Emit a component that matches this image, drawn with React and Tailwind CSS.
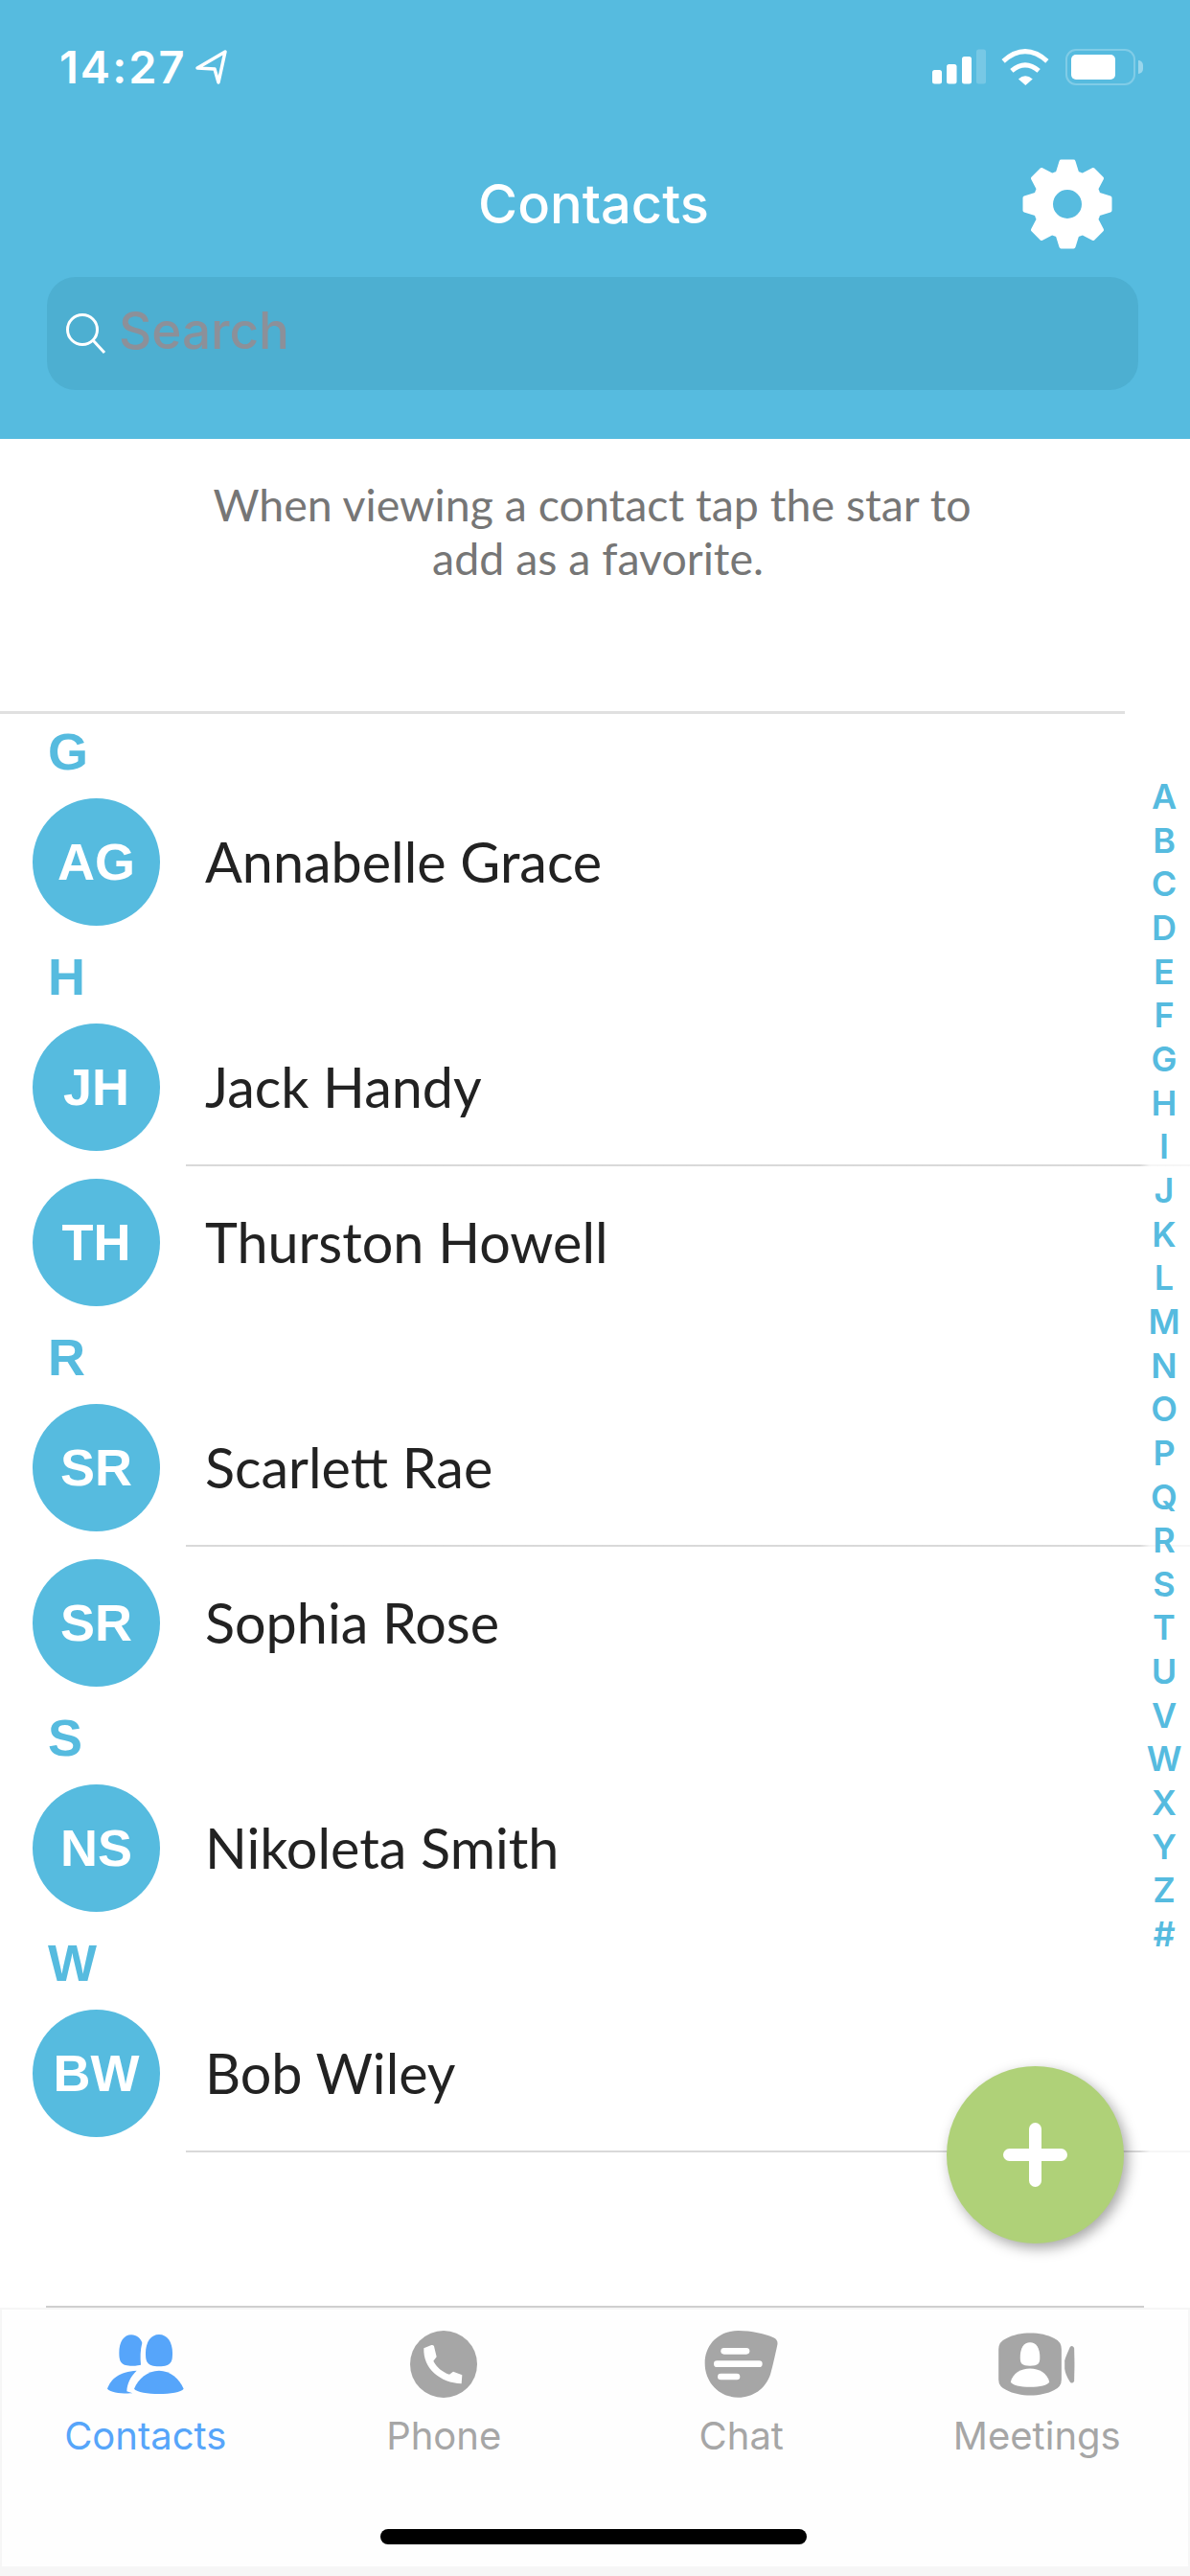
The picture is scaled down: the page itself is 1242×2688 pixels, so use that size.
import React from 'react'

const sections = [
  { letter: 'G', people: [{ initials: 'AG', name: 'Annabelle Grace' }] },
  {
    letter: 'H',
    people: [
      { initials: 'JH', name: 'Jack Handy', line: true },
      { initials: 'TH', name: 'Thurston Howell' },
    ],
  },
  {
    letter: 'R',
    people: [
      { initials: 'SR', name: 'Scarlett Rae', line: true },
      { initials: 'SR', name: 'Sophia Rose' },
    ],
  },
  { letter: 'S', people: [{ initials: 'NS', name: 'Nikoleta Smith' }] },
  { letter: 'W', people: [{ initials: 'BW', name: 'Bob Wiley', line: true }] },
]

const alphabet = 'ABCDEFGHIJKLMNOPQRSTUVWXYZ#'.split('')

function StatusIcons() {
  return (
    <div className="flex items-start">
      <svg className="w-[58px] h-[38px]" viewBox="0 0 58 38" fill="#fff">
        <rect x="2" y="22" width="10" height="14.5" rx="2.5" />
        <rect x="17" y="16" width="10.5" height="20.5" rx="2.5" />
        <rect x="33" y="8" width="10" height="28.5" rx="2.5" />
        <rect x="48" y="0.5" width="10" height="36" rx="2.5" opacity="0.2" />
      </svg>
      <svg className="ml-[15px] w-[52px] h-[38px]" viewBox="373 92 150 113" fill="none" stroke="#fff">
        <path d="M380 130Q448 70 516 130" strokeWidth="15" />
        <path d="M406 160Q448 124 490 160" strokeWidth="15" />
        <path d="M427 186Q448 166 471 186L449 205Z" fill="#fff" stroke="none" />
      </svg>
      <div className="ml-[16px] relative w-[73px] h-[38px] rounded-[11px] border-[2.5px] border-white/25 p-[4px]">
        <div className="w-[46px] h-full rounded-[5px] bg-white" />
        <div className="absolute right-[-10px] top-[10px] w-[5px] h-[14px] rounded-r-full bg-white/40" />
      </div>
    </div>
  )
}

function Gear() {
  const teeth = [0, 45, 90, 135, 180, 225, 270, 315]
  return (
    <svg className="w-[94px] h-[94px]" viewBox="-47 -47 94 94" fill="#fff">
      <circle r="25.5" fill="none" stroke="#fff" strokeWidth="21" />
      {teeth.map((deg) => (
        <path
          key={deg}
          d="M-11 -30L-6.5 -44.5H6.5L11 -30Z"
          stroke="#fff"
          strokeWidth="4"
          strokeLinejoin="round"
          transform={`rotate(${deg})`}
        />
      ))}
    </svg>
  )
}

function ContactsIcon() {
  return (
    <svg className="w-[80px] h-[62px]" viewBox="153 42 240 186" fill="#56a5fa">
      <path d="M273 100C273 65 290 42 315 42C340 42 357 65 357 100C357 125 355 142 315 142C275 142 273 125 273 100Z" />
      <path d="M190 100C190 65 205 43 228 43C245 43 258 55 262 68C256 90 256 115 258 137C245 140 235 140 225 140C195 140 190 125 190 100Z" />
      <path d="M237 212C250 180 280 155 315 155C350 155 378 180 392 212C385 222 350 228 315 228C280 228 245 222 237 212Z" />
      <path d="M153 212C165 180 190 158 245 155C225 175 215 195 214 220L232 226C200 228 165 224 153 212Z" />
    </svg>
  )
}

function PhoneIcon() {
  return (
    <svg className="w-[70px] h-[70px]" viewBox="1105 31 210 210">
      <circle cx="1210" cy="136" r="105" fill="#a6a6a6" />
      <path
        d="M1148 86L1172 76Q1178 75 1180 80L1188 113L1178 126C1188 145 1205 160 1228 168L1240 159L1268 170L1266 197C1200 195 1145 150 1148 86Z"
        fill="#fff"
      />
    </svg>
  )
}

function ChatIcon() {
  return (
    <svg className="w-[77px] h-[70px]" viewBox="108 28 231 210">
      <path
        d="M110 130C110 70 155 28 215 28C255 28 300 38 325 50Q340 57 337 72C330 105 322 140 315 165C300 210 260 237 215 237C155 237 110 190 110 130Z"
        fill="#a6a6a6"
      />
      <rect x="160" y="82" width="90" height="20" rx="10" fill="#fff" />
      <rect x="138" y="122" width="152" height="20" rx="10" fill="#fff" />
      <rect x="150" y="162" width="70" height="20" rx="10" fill="#fff" />
    </svg>
  )
}

function MeetingsIcon() {
  return (
    <svg className="w-[80px] h-[66px]" viewBox="1030 37 240 199">
      <path
        d="M1030 90Q1030 65 1055 55C1095 33 1165 33 1205 55Q1228 65 1228 90L1228 185Q1228 208 1205 218C1165 240 1095 240 1055 218Q1030 208 1030 185Z"
        fill="#a6a6a6"
      />
      <path d="M1098 115C1098 85 1110 68 1129 68C1148 68 1160 85 1160 115C1160 135 1155 142 1129 142C1103 142 1098 135 1098 115Z" fill="#fff" />
      <path d="M1068 192C1075 165 1100 150 1129 150C1158 150 1183 165 1190 192C1185 203 1160 208 1129 208C1098 208 1073 203 1068 192Z" fill="#fff" />
      <path d="M1238 125Q1240 115 1255 82Q1262 75 1268 85Q1270 135 1268 190Q1262 200 1255 192Q1240 170 1238 150Z" fill="#a6a6a6" />
    </svg>
  )
}

function Tab({ icon, label, active, className }) {
  return (
    <div className={`flex flex-col items-center ${className}`}>
      <div className="h-[72px] flex items-center justify-center">{icon}</div>
      <span className={`mt-[16px] text-[40px] leading-[46px] font-['Inter',sans-serif] ${active ? 'text-[#56a5fa]' : 'text-[#a6a6a6]'}`}>
        {label}
      </span>
    </div>
  )
}

function ContactRow({ person }) {
  return (
    <div>
      <div className="flex items-center pl-[34px]">
        <div className="w-[133px] h-[133px] rounded-full bg-[#56bbdf] flex items-center justify-center text-white text-[54px] font-bold font-['Liberation_Sans',sans-serif]">
          {person.initials}
        </div>
        <span className="ml-[47px] text-[57.5px] text-[#222222] font-['Lato',sans-serif]">{person.name}</span>
      </div>
      <div className="h-[29px] flex items-center pl-[194px]">
        {person.line && <div className="w-full h-[2px] bg-gradient-to-r from-[#d9d9d9] from-[95%] to-[#f6f6f6] to-[96%]" />}
      </div>
    </div>
  )
}

export default function App() {
  return (
    <div className="relative w-[1242px] h-[2688px] flex flex-col bg-white overflow-hidden">
      <header className="h-[458px] bg-[#56bbdf] text-white font-['Inter',sans-serif]">
        <div className="flex items-start justify-between pt-[51px] pl-[62px] pr-[57px]">
          <div className="flex items-center">
            <span className="text-[47px] leading-[38px] font-semibold tracking-[2px]">14:27</span>
            <svg className="ml-[9px] w-[34px] h-[36px]" viewBox="0 0 34 36" fill="none" stroke="#fff" strokeWidth="3.5" strokeLinejoin="round">
              <path d="M2 19L31 2L24 34L20 20Z" />
            </svg>
          </div>
          <StatusIcons />
        </div>
        <div className="mt-[77px] relative flex items-center justify-center h-[94px] pr-[3px]">
          <h1 className="text-[56px] font-medium">Contacts</h1>
          <div className="absolute left-[1067px] top-0">
            <Gear />
          </div>
        </div>
        <div className="mt-[29px] ml-[49px] mr-[54px] h-[118px] rounded-[30px] bg-[#4dafd1] flex items-center pl-[19px]">
          <svg className="w-[44px] h-[44px]" viewBox="0 0 44 44" fill="none" stroke="#fff" strokeWidth="3">
            <circle cx="18" cy="18" r="15.5" />
            <path d="M29 29L41 42" />
          </svg>
          <span className="ml-[12px] mb-[5px] text-[53px] font-medium text-[#8c9099]">Search</span>
        </div>
      </header>

      <main className="flex-1">
        <div className="pt-[40px] h-[287px] w-[1174px] border-b-[3px] border-[#e0e0e0]">
          <p className="w-[1236px] text-center text-[46.5px] leading-[56px] text-[#767676] font-['Lato',sans-serif]">
            When viewing a contact tap the star to
            <br />
            <span className="pl-[12px]">add as a favorite.</span>
          </p>
        </div>
        <div className="mt-[-14px]">
          {sections.map((section) => (
            <section key={section.letter} className="mt-[-29px] first:mt-0">
              <div className="h-[102px] pt-[26px] pl-[50px] text-[54px] leading-none font-bold text-[#56bbdf] font-['Liberation_Sans',sans-serif]">
                {section.letter}
              </div>
              {section.people.map((person) => (
                <ContactRow key={person.name} person={person} />
              ))}
            </section>
          ))}
        </div>
      </main>

      <div className="mx-[48px] h-[2px] bg-[#cfcfcf]" />
      <nav className="h-[280px] bg-[#fefefe] border-2 border-[#f6f6f6] border-b-[10px] flex flex-col">
        <div className="grid grid-cols-4 pt-[21px]">
          <Tab icon={<ContactsIcon />} label="Contacts" active className="-translate-x-[5px]" />
          <Tab icon={<PhoneIcon />} label="Phone" className="-translate-x-[3px]" />
          <Tab icon={<ChatIcon />} label="Chat" className="-translate-x-[2px]" />
          <Tab icon={<MeetingsIcon />} label="Meetings" className="-translate-x-[3px]" />
        </div>
        <div className="mt-auto mb-[23px] ml-[395px] w-[445px] h-[16px] rounded-full bg-black" />
      </nav>

      <div className="absolute top-[809px] right-0 w-[54px] flex flex-col items-center text-[36px] leading-[45.66px] font-semibold text-[#56bbdf] font-['Inter',sans-serif]">
        {alphabet.map((letter) => (
          <span key={letter}>{letter}</span>
        ))}
      </div>

      <button className="absolute top-[2156px] left-[988px] w-[185px] h-[185px] rounded-full bg-[#afd178] shadow-[4px_5px_14px_rgba(0,0,0,0.35)] flex items-center justify-center">
        <svg className="w-[67px] h-[67px]" viewBox="0 0 67 67" stroke="#fff" strokeWidth="13" strokeLinecap="round">
          <path d="M33.5 6.5V60.5M6.5 33.5H60.5" />
        </svg>
      </button>
    </div>
  )
}
